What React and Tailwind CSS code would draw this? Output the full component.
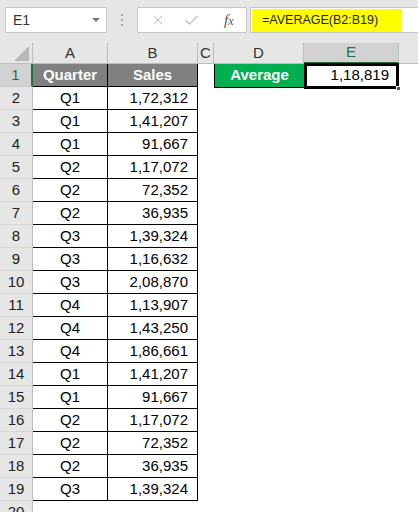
import { X, Check } from 'lucide-react';

const rows = [
  ['Q1', '1,72,312'],
  ['Q1', '1,41,207'],
  ['Q1', '91,667'],
  ['Q2', '1,17,072'],
  ['Q2', '72,352'],
  ['Q2', '36,935'],
  ['Q3', '1,39,324'],
  ['Q3', '1,16,632'],
  ['Q3', '2,08,870'],
  ['Q4', '1,13,907'],
  ['Q4', '1,43,250'],
  ['Q4', '1,86,661'],
  ['Q1', '1,41,207'],
  ['Q1', '91,667'],
  ['Q2', '1,17,072'],
  ['Q2', '72,352'],
  ['Q2', '36,935'],
  ['Q3', '1,39,324'],
];

function RowHead({ n, active }) {
  return (
    <div
      className={
        'flex h-full w-[33px] shrink-0 items-center justify-center border-b border-r ' +
        (active
          ? 'border-b-[#c8c8c8] border-r-[#217346] border-r-2 bg-[#d2d2d2] text-[#217346]'
          : 'border-b-[#d6d6d6] border-r-[#bdbdbd] bg-[#e6e6e6] text-[#222]')
      }
    >
      {n}
    </div>
  );
}

export default function App() {
  return (
    <div className="relative h-[512px] w-[418px] overflow-hidden bg-white font-['Liberation_Sans',Arial,sans-serif] text-[15px] text-black">
      {/* formula bar */}
      <div className="flex h-[43px] items-start bg-[#e6e6e6] pl-[5px] pt-[7px]">
        <div className="flex h-[26px] w-[102px] items-center justify-between border border-[#c6c6c6] bg-white pl-[7px] pr-[6px]">
          <span className="text-[14px] text-[#333]">E1</span>
          <svg width="8" height="5" viewBox="0 0 8 5">
            <path d="M0 0 L8 0 L4 4 Z" fill="#7a7a7a" />
          </svg>
        </div>
        <div className="flex h-[26px] w-[30px] flex-col items-center justify-center gap-[3px]">
          <span className="block h-[2px] w-[2px] bg-[#a8a8a8]" />
          <span className="block h-[2px] w-[2px] bg-[#a8a8a8]" />
          <span className="block h-[2px] w-[2px] bg-[#a8a8a8]" />
        </div>
        <div className="flex h-[26px] w-[110px] items-center border border-[#c6c6c6] bg-white">
          <X size={16} strokeWidth={1.4} color="#bcbcbc" className="ml-[12px]" />
          <Check size={17} strokeWidth={1.6} color="#bcbcbc" className="ml-[17px]" />
          <span className="ml-[24px] font-['Liberation_Serif',serif] text-[15px] italic text-[#555]">
            f<span className="text-[12px]">x</span>
          </span>
        </div>
        <div className="ml-[3px] flex h-[26px] flex-1 items-center border border-r-0 border-[#c6c6c6] bg-white pl-[1px]">
          <div className="flex h-[23px] w-[150px] items-center bg-[#ffff00] pl-[10px] text-[12.5px] text-[#222]">
            =AVERAGE(B2:B19)
          </div>
        </div>
      </div>

      {/* column headers */}
      <div className="flex h-[21px] bg-[#e6e6e6] text-[15px] text-[#333]">
        <div className="flex w-[33px] shrink-0 items-end justify-end border-b border-r border-[#bdbdbd] pb-[2px] pr-[3px]">
          <svg width="15" height="15" viewBox="0 0 15 15">
            <path d="M15 0 L15 15 L0 15 Z" fill="#b9b9b9" />
          </svg>
        </div>
        <div className="flex w-[75px] shrink-0 items-center justify-center border-b border-r border-[#bdbdbd]">A</div>
        <div className="flex w-[90px] shrink-0 items-center justify-center border-b border-r border-[#bdbdbd]">B</div>
        <div className="flex w-[16px] shrink-0 items-center justify-center border-b border-r border-[#bdbdbd]">C</div>
        <div className="flex w-[90px] shrink-0 items-center justify-center border-b border-r border-[#bdbdbd]">D</div>
        <div className="flex w-[95px] shrink-0 items-center justify-center border-b-2 border-r border-[#bdbdbd] border-b-[#217346] bg-[#d2d2d2] text-[#217346]">E</div>
        <div className="flex-1 border-b border-[#bdbdbd]" />
      </div>

      {/* row 1 */}
      <div className="flex h-[23px]">
        <RowHead n={1} active />
        <div className="flex w-[75px] shrink-0 items-center justify-center border-b border-r border-black bg-[#808080] font-bold text-white">
          Quarter
        </div>
        <div className="flex w-[90px] shrink-0 items-center justify-center border-b border-r border-black bg-[#808080] font-bold text-white">
          Sales
        </div>
        <div className="w-[16px] shrink-0" />
        <div className="flex h-[24px] w-[90px] shrink-0 items-center justify-center border-b border-l border-black bg-[#00b050] font-bold text-white">
          Average
        </div>
        <div className="flex w-[95px] shrink-0 items-center justify-end pr-[10px]">1,18,819</div>
      </div>

      {rows.map(function (r, i) {
        return (
          <div key={i} className="flex h-[23px]">
            <RowHead n={i + 2} />
            <div className="flex w-[75px] shrink-0 items-center justify-center border-b border-r border-black">
              {r[0]}
            </div>
            <div className="flex w-[90px] shrink-0 items-center justify-end border-b border-r border-black pr-[9px]">
              {r[1]}
            </div>
          </div>
        );
      })}

      <div className="flex h-[23px]">
        <RowHead n={20} />
      </div>

      {/* active cell E1 */}
      <div className="absolute left-[304px] top-[63px] h-[26px] w-[95px] border-[3px] border-black" />
      <div className="absolute left-[396px] top-[86px] h-[5px] w-[5px] border border-white bg-[#217346]" />
    </div>
  );
}
